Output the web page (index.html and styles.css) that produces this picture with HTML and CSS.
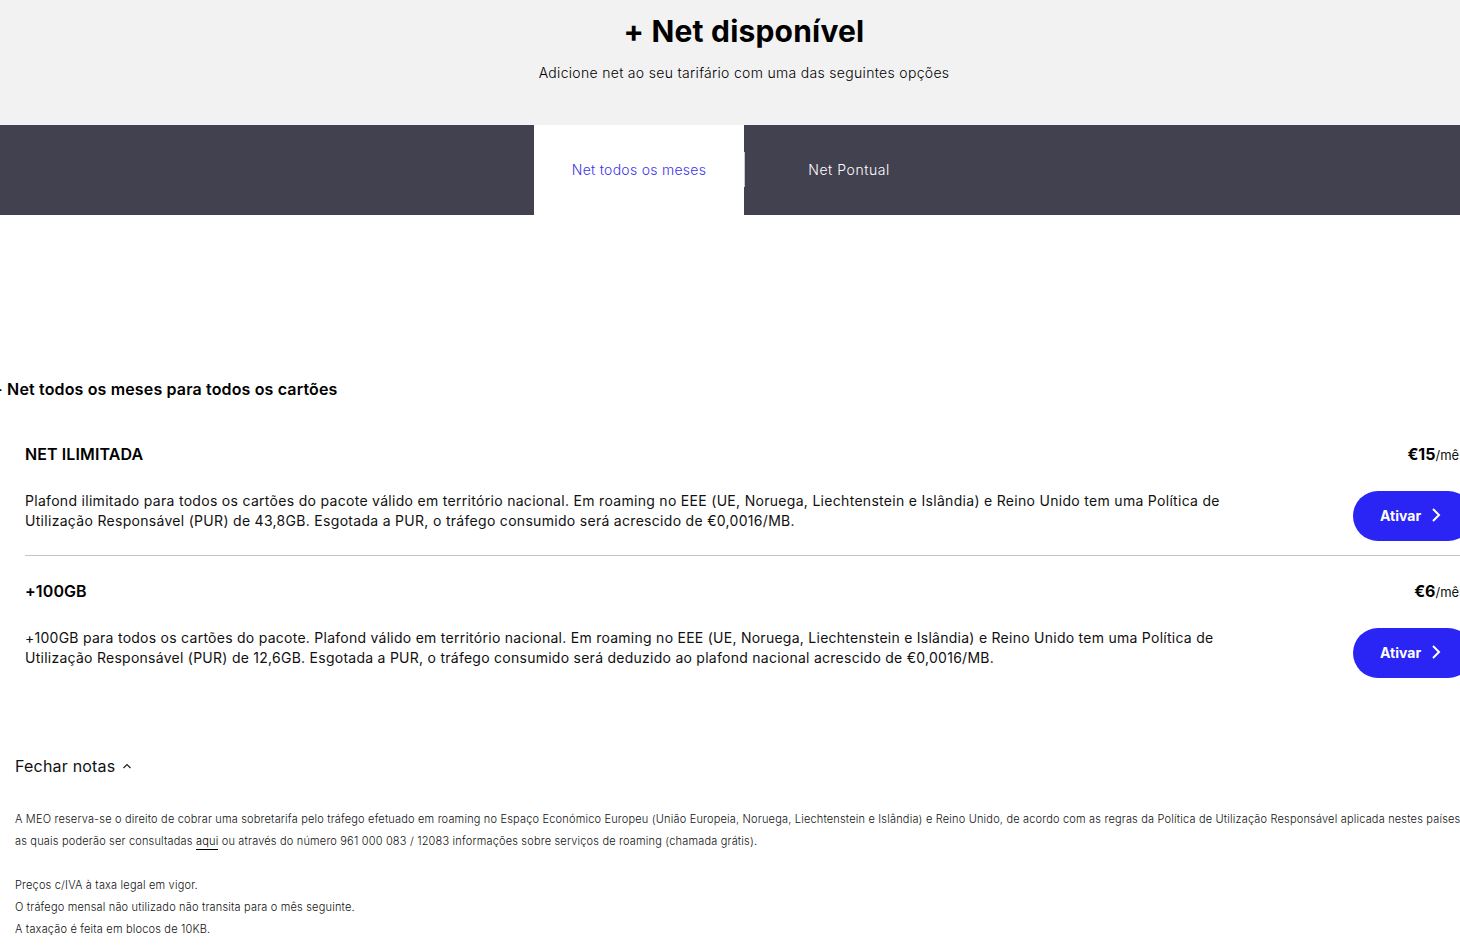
FILE: index.html
```html
<!DOCTYPE html>
<html lang="pt">
<head>
<meta charset="utf-8">
<title>+ Net disponível</title>
<link rel="stylesheet" href="styles.css">
</head>
<body>
<div class="page">
  <header class="hero">
    <h1 class="hero-title">+ Net disponível</h1>
    <p class="hero-sub">Adicione net ao seu tarifário com uma das seguintes opções</p>
  </header>
  <nav class="tabs">
    <a class="tab tab-active">Net todos os meses</a>
    <a class="tab tab-plain">Net Pontual</a>
  </nav>
  <main class="content">
    <h2 class="section-title">+ Net todos os meses para todos os cartões</h2>
    <section class="plans">
      <article class="plan plan-first">
        <div class="plan-head">
          <h3 class="plan-name">NET ILIMITADA</h3>
          <div class="price"><b>€15</b>/mês</div>
        </div>
        <div class="plan-body">
          <p class="plan-desc">Plafond ilimitado para todos os cartões do pacote válido em território nacional. Em roaming no EEE (UE, Noruega, Liechtenstein e Islândia) e Reino Unido tem uma Política de Utilização Responsável (PUR) de 43,8GB. Esgotada a PUR, o tráfego consumido será acrescido de €0,0016/MB.</p>
          <button class="btn">Ativar
            <svg class="btn-icon" viewBox="0 0 10 16" width="10" height="16"><path d="M2 2l6 6-6 6" fill="none" stroke="#fff" stroke-width="2"/></svg>
          </button>
        </div>
      </article>
      <article class="plan">
        <div class="plan-head">
          <h3 class="plan-name">+100GB</h3>
          <div class="price"><b>€6</b>/mês</div>
        </div>
        <div class="plan-body">
          <p class="plan-desc plan-desc-tight">+100GB para todos os cartões do pacote. Plafond válido em território nacional. Em roaming no EEE (UE, Noruega, Liechtenstein e Islândia) e Reino Unido tem uma Política de Utilização Responsável (PUR) de 12,6GB. Esgotada a PUR, o tráfego consumido será deduzido ao plafond nacional acrescido de €0,0016/MB.</p>
          <button class="btn">Ativar
            <svg class="btn-icon" viewBox="0 0 10 16" width="10" height="16"><path d="M2 2l6 6-6 6" fill="none" stroke="#fff" stroke-width="2"/></svg>
          </button>
        </div>
      </article>
    </section>
    <div class="notes">
      <div class="notes-toggle">Fechar notas
        <svg class="notes-icon" viewBox="0 0 10 6" width="10" height="6"><path d="M1.5 5L5 1.5 8.500 5" fill="none" stroke="#222" stroke-width="1.200"/></svg>
      </div>
      <p class="note">A MEO reserva-se o direito de cobrar uma sobretarifa pelo tráfego efetuado em roaming no Espaço Económico Europeu (União Europeia, Noruega, Liechtenstein e Islândia) e Reino Unido, de acordo com as regras da Política de Utilização Responsável aplicada nestes países,<br>as quais poderão ser consultadas <a class="note-link">aqui</a> ou através do número 961 000 083 / 12083 informações sobre serviços de roaming (chamada grátis).</p>
      <p class="note note-gap">Preços c/IVA à taxa legal em vigor.<br>O tráfego mensal não utilizado não transita para o mês seguinte.<br>A taxação é feita em blocos de 10KB.</p>
    </div>
  </main>
</div>
</body>
</html>
```
FILE: styles.css
```css
html, body {
  margin: 0;
  height: 952px;
  overflow: hidden;
  background: #fff;
}
.page {
  width: 1488px;
  font-family: Inter, "Noto Sans", sans-serif;
  color: #111;
}
.hero {
  height: 125px;
  background: #f2f2f2;
  box-sizing: border-box;
  padding-top: 13px;
  text-align: center;
}
.hero-title {
  margin: 0;
  font-size: 30px;
  line-height: 37px;
  font-weight: 700;
  color: #000;
  letter-spacing: 0.2px;
}
.hero-sub {
  margin: 13px 0 0;
  font-size: 14px;
  line-height: 20px;
  font-weight: 300;
  color: #000;
  letter-spacing: 0.31px;
}
.tabs {
  height: 90px;
  background: #42414f;
  display: flex;
  justify-content: center;
}
.tab {
  width: 210px;
  box-sizing: border-box;
  padding-bottom: 2px;
  display: flex;
  align-items: center;
  justify-content: center;
  font-size: 14px;
  font-weight: 300;
  letter-spacing: 0.27px;
  color: #fff;
}
.tab-plain {
  letter-spacing: 0.55px;
}
.tab-active {
  position: relative;
  background: #fff;
  color: #3d33e6;
}
.tab-active::after {
  content: "";
  position: absolute;
  left: 100%;
  top: 27px;
  width: 1px;
  height: 35px;
  background: #c9c9d0;
}
.content {
  padding-top: 164px;
}
.section-title {
  margin: 0 0 0 -8px;
  font-size: 16px;
  line-height: 20px;
  font-weight: 600;
  letter-spacing: 0.15px;
  color: #000;
}
.plans {
  margin: 45px 15px 0 25px;
}
.plan {
  padding: 0 0 14px;
  border-bottom: 1px solid #c4c4c4;
}
.plan + .plan {
  border-bottom: 0;
  padding-top: 25px;
}
.plan-head {
  display: flex;
  justify-content: space-between;
  align-items: baseline;
}
.plan-name {
  margin: 0;
  font-size: 16px;
  line-height: 20px;
  font-weight: 600;
  letter-spacing: 0.1px;
  color: #000;
}
.price {
  font-size: 13px;
  margin-right: 7px;
  white-space: nowrap;
}
.price b {
  font-size: 16px;
  font-weight: 700;
  color: #000;
}
.plan-body {
  display: flex;
  justify-content: space-between;
  align-items: flex-start;
  margin-top: 27px;
}
.plan-desc {
  margin: 0;
  width: 1210px;
  font-size: 14px;
  line-height: 20px;
  font-weight: 400;
  letter-spacing: 0.3px;
}
.plan-desc-tight {
  letter-spacing: 0.26px;
}
.btn {
  width: 120px;
  height: 50px;
  border: 0;
  border-radius: 25px;
  background: #2a24f5;
  color: #fff;
  font-family: inherit;
  font-size: 14px;
  font-weight: 700;
  display: flex;
  align-items: center;
  gap: 10px;
  padding: 0 0 2px 27px;
}
.notes {
  margin: 64px 0 0 15px;
}
.notes-toggle {
  font-size: 16px;
  line-height: 20px;
  font-weight: 400;
  letter-spacing: 0.2px;
  display: flex;
  align-items: center;
  gap: 7px;
}
.notes-icon {
  display: block;
}
.note {
  margin: 32px 0 0;
  font-size: 11px;
  line-height: 22px;
  font-weight: 300;
  letter-spacing: 0.18px;
  white-space: nowrap;
}
.note-gap {
  margin-top: 22px;
}
.note-link {
  color: #000;
  border-bottom: 1px solid #000;
  padding-bottom: 1px;
}
```
